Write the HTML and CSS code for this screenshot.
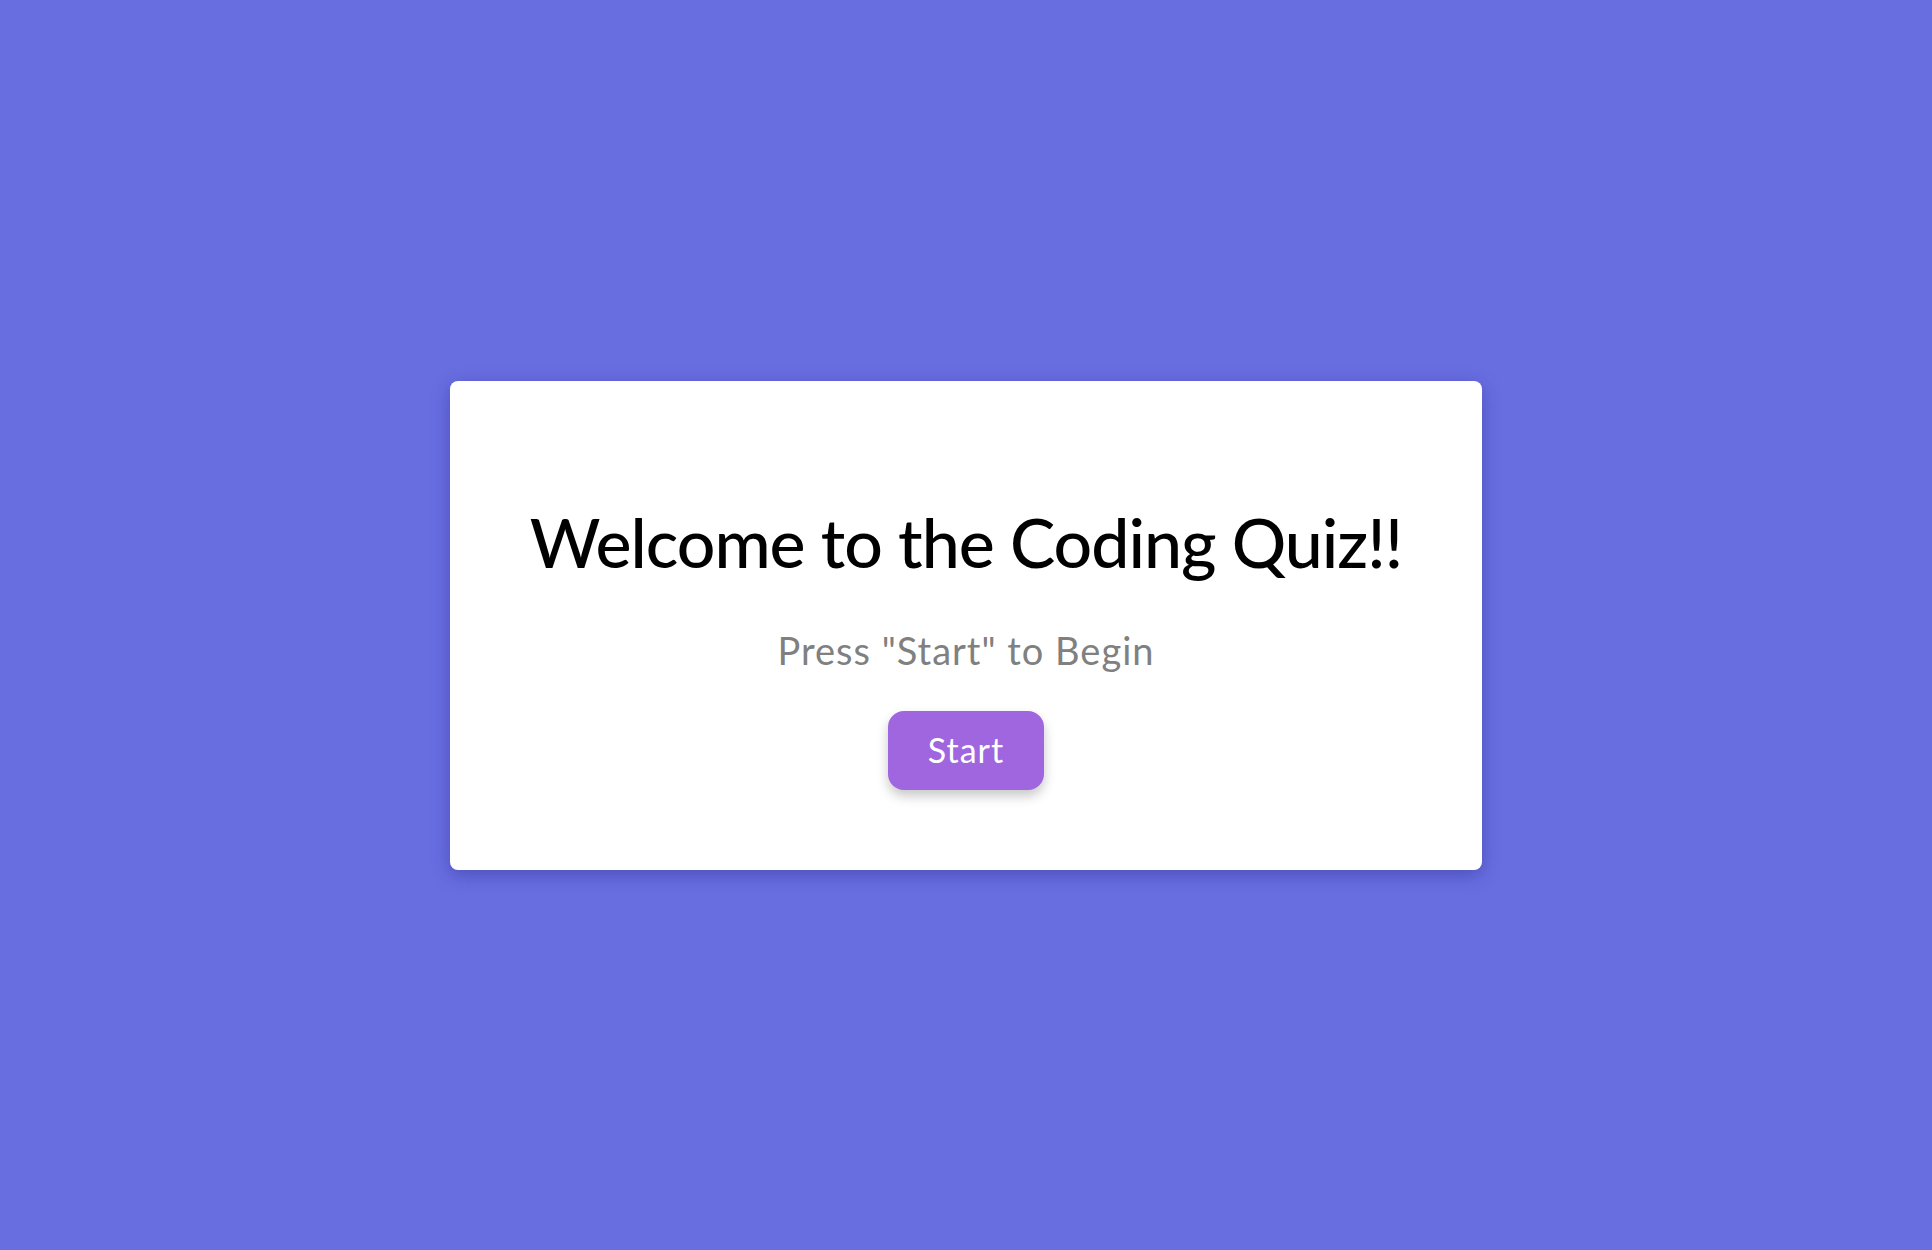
FILE: index.html
```html
<!DOCTYPE html>
<html lang="en">
<head>
<meta charset="utf-8">
<title>Coding Quiz</title>
<link rel="stylesheet" href="styles.css">
</head>
<body>
<main class="page">
  <section class="card">
    <h1 class="title">Welcome to the Coding Quiz!!</h1>
    <p class="subtitle">Press "Start" to Begin</p>
    <button class="start-btn" type="button">Start</button>
  </section>
</main>
</body>
</html>
```
FILE: styles.css
```css
* { box-sizing: border-box; }
html, body {
  margin: 0;
  padding: 0;
  height: 100%;
}
body {
  background: #686de0;
  font-family: "Lato", "Noto Sans", sans-serif;
}
.page {
  min-height: 100vh;
  display: flex;
  align-items: center;
  justify-content: center;
}
.card {
  width: 1032px;
  height: 489px;
  background: #ffffff;
  border-radius: 8px;
  box-shadow: 0 5px 18px rgba(30, 30, 120, 0.35);
  display: flex;
  flex-direction: column;
  align-items: center;
  padding: 127px 40px 80px;
}
.title {
  margin: 0;
  font-size: 68px;
  line-height: 1;
  font-weight: 500;
  letter-spacing: -1px;
  color: #000;
}
.subtitle {
  margin: 55px 0 0;
  font-size: 38px;
  line-height: 1;
  letter-spacing: 1px;
  color: #808080;
}
.start-btn {
  margin-top: 42px;
  width: 156px;
  height: 79px;
  border: none;
  border-radius: 16px;
  background: #a066df;
  color: #fff;
  font-family: inherit;
  font-size: 34px;
  line-height: 1;
  letter-spacing: 1px;
  box-shadow: 0 6px 12px rgba(0, 0, 0, 0.22);
  cursor: pointer;
}
```
